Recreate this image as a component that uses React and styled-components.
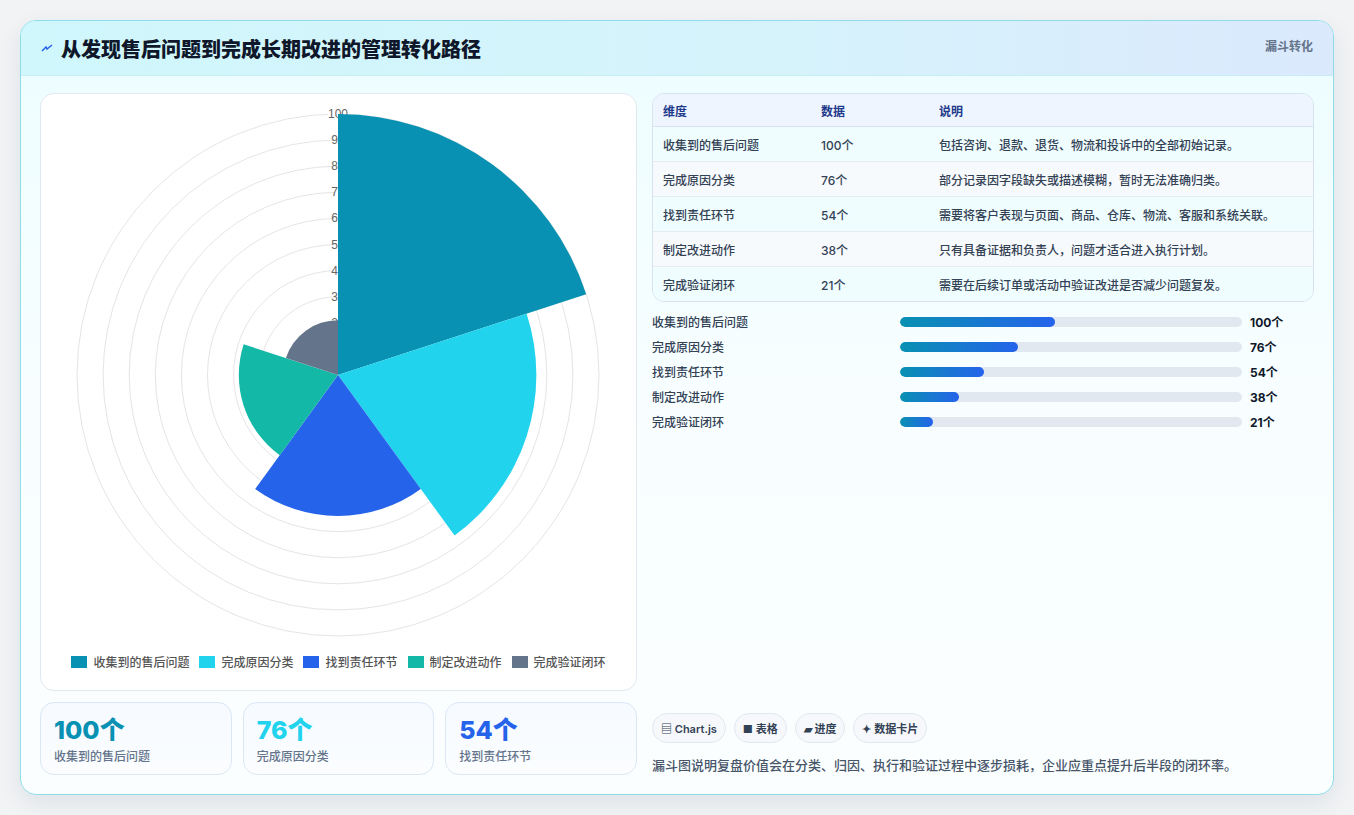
import React from "react";
import styled, { createGlobalStyle } from "styled-components";

const Global = createGlobalStyle`
  body { margin: 0; background: #f1f3f5; font-family: Inter, "Noto Sans CJK SC", sans-serif; font-weight: 500; }
`;

const Page = styled.div`
  padding: 20px 20px 21px 20px;
  width: 1314px;
`;

const Card = styled.div`
  border: 1px solid #8fdcea;
  border-radius: 16px;
  overflow: hidden;
  background: linear-gradient(180deg, #ecfdff 0%, #f8feff 50%, #fbfeff 100%);
  box-shadow: 0 8px 24px rgba(15, 40, 60, 0.08);
`;

const Header = styled.div`
  height: 54px;
  display: flex;
  align-items: center;
  justify-content: space-between;
  padding: 0 20px;
  background: linear-gradient(90deg, #cff7fc 0%, #d6f2fb 60%, #dbe9fd 100%);
  border-bottom: 1px solid #c8eef5;
`;

const Title = styled.h1`
  margin: 0;
  font-size: 20px;
  font-weight: 800;
  color: #0f172a;
  display: flex;
  align-items: center;
  gap: 8px;
`;

const Tag = styled.span`
  font-size: 12px;
  font-weight: 700;
  color: #64748b;
  align-self: flex-start;
  margin-top: 16px;
`;

const Body = styled.div`
  display: grid;
  grid-template-columns: 597px 662px;
  gap: 15px;
  padding: 17px 19px 19px 19px;
`;

const Col = styled.div`
  display: flex;
  flex-direction: column;
`;

const ChartCard = styled.div`
  height: 598px;
  box-sizing: border-box;
  background: #fff;
  border: 1px solid #e2e8f0;
  border-radius: 14px;
  display: flex;
  flex-direction: column;
  align-items: center;
`;

const Legend = styled.div`
  display: flex;
  gap: 10px;
  margin-top: 4px;
  font-size: 12px;
  color: #555;
`;

const LegendItem = styled.span`
  display: flex;
  align-items: center;
  gap: 6px;
  &::before {
    content: "";
    width: 16px;
    height: 12px;
    background: ${(p) => p.$c};
  }
`;

const Stats = styled.div`
  display: grid;
  grid-template-columns: repeat(3, 1fr);
  gap: 11px;
  margin-top: 11px;
`;

const Stat = styled.div`
  height: 73px;
  box-sizing: border-box;
  border: 1px solid #dbe7f5;
  border-radius: 14px;
  background: linear-gradient(180deg, #f6faff, #fbfdff);
  padding: 12px 13px;
`;

const StatNum = styled.div`
  font-size: 25px;
  font-weight: 800;
  color: ${(p) => p.$c};
  line-height: 30px;
`;

const StatLabel = styled.div`
  font-size: 12px;
  color: #64748b;
  margin-top: 2px;
`;

const Table = styled.table`
  width: 100%;
  border-collapse: separate;
  border-spacing: 0;
  border: 1px solid #d6e2ee;
  border-radius: 12px;
  overflow: hidden;
  font-size: 12px;
  color: #334155;
  th {
    text-align: left;
    font-weight: 600;
    color: #1e3a8a;
    background: #eef5ff;
    height: 32px;
    padding: 0 10px;
    border-bottom: 1px solid #d6e2ee;
  }
  td {
    height: 34px;
    padding: 0 10px;
    border-bottom: 1px solid #e5edf3;
  }
  tr:last-child td { border-bottom: none; }
  tbody tr:nth-child(odd) td { background: #effdff; }
  tbody tr:nth-child(even) td { background: #f7fafc; }
`;

const Bars = styled.div`
  display: flex;
  flex-direction: column;
  gap: 9px;
  margin-top: 11px;
`;

const BarRow = styled.div`
  display: grid;
  grid-template-columns: 240px 342px auto;
  gap: 8px;
  align-items: center;
  font-size: 12px;
  color: #334155;
  height: 16px;
`;

const Track = styled.div`
  height: 10px;
  border-radius: 5px;
  background: #e2e8f0;
  overflow: hidden;
`;

const Fill = styled.div`
  height: 100%;
  border-radius: 5px;
  background: linear-gradient(90deg, #0891b2, #2563eb);
`;

const BarVal = styled.span`
  font-weight: 700;
  color: #0f172a;
`;

const Chips = styled.div`
  display: flex;
  gap: 8px;
  margin-top: auto;
`;

const Chip = styled.span`
  font-size: 11px;
  font-weight: 600;
  color: #334155;
  border: 1px solid #e2e8f0;
  background: #f6f8fb;
  border-radius: 15px;
  padding: 6px 8px;
`;

const Note = styled.p`
  margin: 12px 0 1px;
  font-size: 13px;
  color: #475569;
`;

const data = [
  { label: "收集到的售后问题", v: 100, c: "#0891b2", desc: "包括咨询、退款、退货、物流和投诉中的全部初始记录。" },
  { label: "完成原因分类", v: 76, c: "#22d3ee", desc: "部分记录因字段缺失或描述模糊，暂时无法准确归类。" },
  { label: "找到责任环节", v: 54, c: "#2563eb", desc: "需要将客户表现与页面、商品、仓库、物流、客服和系统关联。" },
  { label: "制定改进动作", v: 38, c: "#14b8a6", desc: "只有具备证据和负责人，问题才适合进入执行计划。" },
  { label: "完成验证闭环", v: 21, c: "#64748b", desc: "需要在后续订单或活动中验证改进是否减少问题复发。" },
];

const CX = 298, CY = 281, K = 2.61;

function sector(r, a0, a1) {
  const p = (a) => [CX + r * Math.cos(a), CY + r * Math.sin(a)];
  const [x0, y0] = p(a0);
  const [x1, y1] = p(a1);
  return `M${CX} ${CY} L${x0} ${y0} A${r} ${r} 0 0 1 ${x1} ${y1} Z`;
}

function Polar() {
  const step = (2 * Math.PI) / 5;
  return (
    <svg width="597" height="555">
      {[1, 2, 3, 4, 5, 6, 7, 8, 9, 10].map((i) => (
        <circle key={i} cx={CX} cy={CY} r={i * 10 * K} fill="none" stroke="#e5e5e5" />
      ))}
      {[2, 3, 4, 5, 6, 7, 8, 9, 10].map((i) => (
        <g key={i}>
          <rect x={CX - (i === 10 ? 10 : 4)} y={CY - i * 10 * K - 6} width={i === 10 ? 20 : 8} height="12" fill="#fff" />
          <text x={CX} y={CY - i * 10 * K + 4} textAnchor="middle" fontSize="12" fill="#666" fontFamily="Liberation Sans, sans-serif">
            {i * 10}
          </text>
        </g>
      ))}
      {data.map((d, i) => (
        <path key={d.label} d={sector(d.v * K, -Math.PI / 2 + i * step, -Math.PI / 2 + (i + 1) * step)} fill={d.c} />
      ))}
    </svg>
  );
}

export default function App() {
  return (
    <Page>
      <Global />
      <Card>
        <Header>
          <Title>
            <svg width="12" height="12" viewBox="0 0 12 12">
              <path d="M1 9 L5 5 L6 7 L11 3" fill="none" stroke="#2563eb" strokeWidth="1.5" />
            </svg>
            从发现售后问题到完成长期改进的管理转化路径
          </Title>
          <Tag>漏斗转化</Tag>
        </Header>
        <Body>
          <Col>
            <ChartCard>
              <Polar />
              <Legend>
                {data.map((d) => (
                  <LegendItem key={d.label} $c={d.c}>{d.label}</LegendItem>
                ))}
              </Legend>
            </ChartCard>
            <Stats>
              {data.slice(0, 3).map((d) => (
                <Stat key={d.label}>
                  <StatNum $c={d.c}>{d.v}个</StatNum>
                  <StatLabel>{d.label}</StatLabel>
                </Stat>
              ))}
            </Stats>
          </Col>
          <Col>
            <Table>
              <thead>
                <tr>
                  <th style={{ width: 138 }}>维度</th>
                  <th style={{ width: 98 }}>数据</th>
                  <th>说明</th>
                </tr>
              </thead>
              <tbody>
                {data.map((d) => (
                  <tr key={d.label}>
                    <td>{d.label}</td>
                    <td>{d.v}个</td>
                    <td>{d.desc}</td>
                  </tr>
                ))}
              </tbody>
            </Table>
            <Bars>
              {data.map((d) => (
                <BarRow key={d.label}>
                  <span>{d.label}</span>
                  <Track>
                    <Fill style={{ width: `${d.v * 0.453}%` }} />
                  </Track>
                  <BarVal>{d.v}个</BarVal>
                </BarRow>
              ))}
            </Bars>
            <Chips>
              <Chip>▤ Chart.js</Chip>
              <Chip>■ 表格</Chip>
              <Chip>▰ 进度</Chip>
              <Chip>✦ 数据卡片</Chip>
            </Chips>
            <Note>漏斗图说明复盘价值会在分类、归因、执行和验证过程中逐步损耗，企业应重点提升后半段的闭环率。</Note>
          </Col>
        </Body>
      </Card>
    </Page>
  );
}
